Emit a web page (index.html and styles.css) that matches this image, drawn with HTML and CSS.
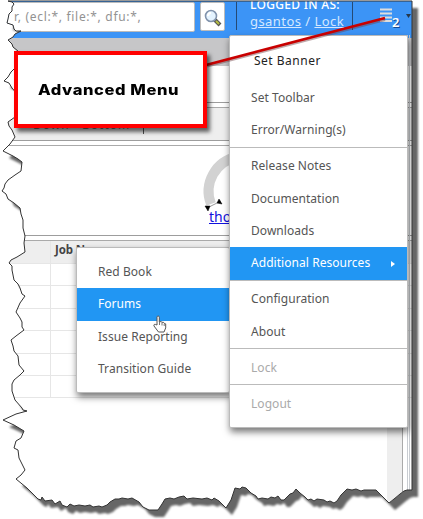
FILE: index.html
```html
<!DOCTYPE html>
<html lang="en">
<head>
<meta charset="utf-8">
<title>Advanced Menu</title>
<link rel="stylesheet" href="styles.css">
</head>
<body>
<main class="capture">
  <svg class="layer shadow" viewBox="0 0 423 519"><use href="#tear" transform="translate(6 7)"/></svg>
  <section class="app">
    <header class="toolbar">
      <div class="search">r, (ecl:*, file:*, dfu:*,</div>
      <button class="find" aria-label="Search"><svg width="22" height="22" viewBox="0 0 22 22"><path d="M12 13l5 5" stroke="#555" stroke-width="4"/><path d="M13 14l3 3" stroke="#b5bd42" stroke-width="2"/><circle cx="8" cy="9" r="5.500" fill="#e4f3ff" stroke="#8294ad" stroke-width="1.600"/><path d="M5 9a3 3 0 0 1 3-3" fill="none" stroke="#fff" stroke-width="2"/></svg></button>
      <div class="login"><span>LOGGED IN AS:</span><span class="user"><a>gsantos</a> / <a>Lock</a></span></div>
      <div class="advanced"><svg width="36" height="32" viewBox="0 0 36 32"><path d="M3 7.500h12M3 11.500h12M3 15.500h12M3 19h12" stroke="#ddd" stroke-width="2"/><path d="M29 12h5l-2.500 4z" fill="#26384c"/></svg><b>2</b></div>
    </header>
    <div class="tabs"></div>
    <div class="blank"></div>
    <div class="gap"></div>
    <div class="commands"><span>Down &nbsp; Bottom</span></div>
    <div class="gap"></div>
    <div class="graph"><svg width="60" height="80" viewBox="0 0 60 80"><path d="M38 11A35 35 0 0 0 12 58" fill="none" stroke="#d2d2d2" stroke-width="10"/><path d="M8 62l14-7" stroke="#999"/><path d="M6 60l5 0-2 5zM20 53l3 5-5-1z" fill="#000" stroke="#000" stroke-width=".5"/></svg><a>thor</a></div>
    <div class="gap"></div>
    <div class="grid">
      <div class="row head"><i></i><b>Job Name</b></div>
      <div class="row"><i></i></div><div class="row"><i></i></div><div class="row"><i></i></div>
      <div class="row"><i></i></div><div class="row"><i></i></div><div class="row"><i></i></div>
    </div>
    <div class="scrollbar"></div>
    <div class="rail"></div>
    <nav class="menu sub">
      <span>Red Book</span><span class="active">Forums</span><span>Issue Reporting</span><span>Transition Guide</span>
    </nav>
    <nav class="menu main">
      <span class="banner">Set Banner</span><span>Set Toolbar</span><span>Error/Warning(s)</span>
      <hr><span>Release Notes</span><span>Documentation</span><span>Downloads</span><span class="active">Additional Resources<i></i></span>
      <hr><span>Configuration</span><span>About</span>
      <hr><span class="off">Lock</span>
      <hr><span class="off">Logout</span>
    </nav>
  </section>
  <svg class="layer" viewBox="0 0 423 519">
    <defs><path id="tear" d="M8 1L12 2L14 4L12 7L12 11L9 14L8 19L7 23L13 25L14 29L16 31L21 31L15 34L13 37L8 40L12 44L13 47L18 51L22 60L15 68L11 72L8 77L4 81L9 83L12 88L18 95L18 112L15 117L8 122L9 126L12 130L15 137L10 144L6 148L3 151L13 156L18 159L22 162L21 171L15 175L8 180L5 184L4 188L2 191L6 194L8 199L14 203L20 208L21 214L23 220L23 228L25 236L24 243L25 252L17 257L11 260L9 263L12 266L12 270L14 280L18 284L20 288L22 294L25 296L20 303L16 312L20 318L22 322L22 327L24 330L16 336L11 340L13 346L14 351L18 356L19 365L24 371L20 375L14 380L12 384L12 391L15 400L22 408L23 410L27 411L16 414L3 420L14 425L24 431L21 438L16 441L14 448L18 450L19 458L22 464L25 470L21 475L16 479L27 488L38 499L41 500L42 497L45 501L52 500L55 504L60 501L62 505L67 507L70 504L74 506L79 505L85 506L90 505L93 507L99 506L102 507L107 505L110 502L115 499L119 499L122 498L128 499L132 498L139 502L143 507L149 510L158 510L162 504L165 499L170 498L174 499L179 497L184 496L187 499L193 498L202 499L207 498L212 500L214 498L219 501L223 505L226 508L231 500L235 488L240 489L242 487L246 488L251 493L256 496L258 499L262 498L268 499L271 497L275 498L278 496L281 500L284 500L290 494L293 493L296 489L300 493L305 497L308 500L311 499L314 501L317 499L324 500L327 502L330 501L334 503L337 501L341 495L344 492L347 489L352 490L356 489L361 491L364 490L376 490L382 496L389 503L394 499L400 494L404 491L407 490L412 490L412 1Z"/></defs>
    <use class="outline" href="#tear"/>
    <path d="M206 65L384 18.500" stroke="#704045" stroke-opacity=".45" stroke-width="3" transform="translate(1 1)"/>
    <path d="M206 65L385 18" stroke="#c90000" stroke-width="2.500"/>
  </svg>
  <div class="callout"><span>Advanced Menu</span></div>
  <svg class="hand" width="14" height="18" viewBox="0 0 14 18"><path d="M4 10V2.200C4 .6 6.300.6 6.300 2.200V7L8 6.500l1 .9 1.300-.2.9 1.100 1.500.6v4L11 17H5.500L1 11c-.6-1.400.8-2.200 1.700-1.500z" fill="#fff" stroke="#555"/><path d="M6.500 7v3M9 8v2.500M11.200 9v2" stroke="#777" fill="none"/></svg>
</main>
</body>
</html>
```
FILE: styles.css
```css
* { box-sizing: border-box; }
body { margin: 0; background: #fff; font-family: "Noto Sans", "Open Sans", sans-serif; }
.capture { position: relative; width: 423px; height: 519px; overflow: hidden; }
.layer { position: absolute; inset: 0; width: 423px; height: 519px; }
.shadow { fill: #666; filter: blur(1.2px); }
.outline { fill: none; stroke: #333; stroke-width: 1; }
.app {
  position: relative; width: 412px; height: 519px; background: #fff;
  clip-path: path("M8 1L12 2L14 4L12 7L12 11L9 14L8 19L7 23L13 25L14 29L16 31L21 31L15 34L13 37L8 40L12 44L13 47L18 51L22 60L15 68L11 72L8 77L4 81L9 83L12 88L18 95L18 112L15 117L8 122L9 126L12 130L15 137L10 144L6 148L3 151L13 156L18 159L22 162L21 171L15 175L8 180L5 184L4 188L2 191L6 194L8 199L14 203L20 208L21 214L23 220L23 228L25 236L24 243L25 252L17 257L11 260L9 263L12 266L12 270L14 280L18 284L20 288L22 294L25 296L20 303L16 312L20 318L22 322L22 327L24 330L16 336L11 340L13 346L14 351L18 356L19 365L24 371L20 375L14 380L12 384L12 391L15 400L22 408L23 410L27 411L16 414L3 420L14 425L24 431L21 438L16 441L14 448L18 450L19 458L22 464L25 470L21 475L16 479L27 488L38 499L41 500L42 497L45 501L52 500L55 504L60 501L62 505L67 507L70 504L74 506L79 505L85 506L90 505L93 507L99 506L102 507L107 505L110 502L115 499L119 499L122 498L128 499L132 498L139 502L143 507L149 510L158 510L162 504L165 499L170 498L174 499L179 497L184 496L187 499L193 498L202 499L207 498L212 500L214 498L219 501L223 505L226 508L231 500L235 488L240 489L242 487L246 488L251 493L256 496L258 499L262 498L268 499L271 497L275 498L278 496L281 500L284 500L290 494L293 493L296 489L300 493L305 497L308 500L311 499L314 501L317 499L324 500L327 502L330 501L334 503L337 501L341 495L344 492L347 489L352 490L356 489L361 491L364 490L376 490L382 496L389 503L394 499L400 494L404 491L407 490L412 490L412 1Z");
}
.toolbar { display: flex; height: 38px; padding-top: 2px; background: #3c94f6; color: #fff; }
.search { width: 195px; height: 30px; padding-left: 13px; border-radius: 0 2px 2px 0; border: 1px solid #bbb; background: #fff; color: #929292; font-size: 12px; line-height: 27px; letter-spacing: .7px; white-space: nowrap; }
.find { width: 25px; height: 29px; margin-left: 5px; padding: 3px 0 0 2px; border: 1px solid #bbb; border-radius: 2px; background: #fff; }
.find svg { display: block; }
.login { display: flex; flex-direction: column; width: 117px; height: 28px; margin-left: 11px; padding-left: 13px; border-left: 1px solid #254a75; border-right: 1px solid #254a75; font-size: 12px; line-height: 15px; letter-spacing: .3px; white-space: nowrap; }
.login span:first-child { margin-top: -4px; font-weight: 500; line-height: 13px; }
.user { margin-top: 2px; color: #d4e8ff; font-size: 13px; line-height: 16px; letter-spacing: .45px; }
.login a { text-decoration: underline; }
.advanced { display: flex; width: 58px; padding-left: 24px; }
.advanced svg { flex: none; }
.advanced b { margin: 10px 0 0 -21px; font: 600 13px/20px "Noto Sans", sans-serif; text-shadow: 1px 1px #164b91; }
.tabs { height: 28px; background: #c6c6c8; }
.blank { height: 36px; }
.gap { height: 6px; border-top: 1px solid #9d9d9d; border-bottom: 1px solid #aaa; background: #fff; }
.commands { height: 32px; padding: 8px 0 0 33px; background: #eee; font-size: 12px; line-height: 18px; letter-spacing: 1px; color: #777; }
.commands span { display: block; width: 111px; height: 18px; border-right: 1px solid #555; }
.graph { display: flex; flex-direction: column; height: 89px; padding-left: 199px; }
.graph svg { flex: none; margin-bottom: -19px; }
.graph a { padding-left: 10px; color: #11d; font-size: 14px; line-height: 20px; text-decoration: underline; }
.row { display: flex; height: 22.400px; border-bottom: 1px solid #e6e6e6; }
.row i { width: 51px; flex: none; border-right: 1px solid #e6e6e6; }
.row b { padding-left: 4px; color: #444; font-size: 11.500px; line-height: 17px; letter-spacing: -.1px; }
.row.head { height: 23px; background: #eee; }
.scrollbar { position: absolute; left: 387px; top: 400px; width: 16px; height: 110px; background: #eee; border-right: 1px solid #aaa; }
.rail { position: absolute; left: 407px; top: 35px; width: 3px; height: 475px; border: solid #c9cdd2; border-width: 0 1px; }
.menu { position: absolute; display: flex; flex-direction: column; background: #fff; border: 1px solid #bbb; border-radius: 2px; box-shadow: 1px 4px 7px #0008; font-size: 12px; line-height: 32px; letter-spacing: .05px; color: #555; white-space: nowrap; }
.menu span { flex: none; height: 32.300px; padding-left: 21px; }
.menu .active { background: #2196f3; color: #fff; }
.menu hr { flex: none; width: 100%; height: 1px; margin: 0 0 2.800px; border: 0; background: #bbb; }
.menu .off { color: #aaa; }
.menu .banner { height: 44px; padding: 7px 0 0 24px; color: #222; letter-spacing: .5px; }
.menu .active i { display: inline-block; margin-left: 21px; border-left: 4px solid #fff; border-top: 3px solid transparent; border-bottom: 3px solid transparent; }
.sub { left: 76px; top: 247px; width: 154px; height: 146px; padding-top: 8px; }
.main { left: 229px; top: 35px; width: 179px; height: 393px; padding-top: 2px; }
.callout { position: absolute; left: 14px; top: 51px; width: 193px; height: 77px; border: 4px solid #f00; background: #fff; box-shadow: 3px 4px 4px #0009; color: #000; font: 800 14px/69px Inter, sans-serif; letter-spacing: .5px; padding-left: 20px; white-space: nowrap; }
.callout span { display: inline-block; transform: scaleX(1.18); transform-origin: left; }
.hand { position: absolute; left: 153px; top: 315px; }
```
